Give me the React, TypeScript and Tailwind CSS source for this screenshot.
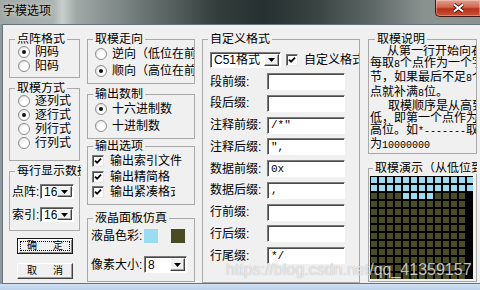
import React from "react";

type GroupProps = {
  title: string;
  className?: string;
  bodyClass?: string;
  legendClass?: string;
  children?: React.ReactNode;
};

function Group({ title, className = "", bodyClass = "", legendClass = "ml-[5px]", children }: GroupProps) {
  return (
    <fieldset className={"min-w-0 border border-[#a9a9a9] " + className}>
      <legend className={"px-[2px] h-[12px] leading-[12px] whitespace-nowrap overflow-hidden " + legendClass}>
        {title}
      </legend>
      <div className={bodyClass}>{children}</div>
    </fieldset>
  );
}

function Radio({ label, checked = false, className = "" }: { label: string; checked?: boolean; className?: string }) {
  return (
    <div className={"flex items-center h-[14px] whitespace-nowrap overflow-hidden " + className}>
      <span className="w-[12px] h-[12px] shrink-0 rounded-full border border-[#8d8d8d] bg-[radial-gradient(circle_at_65%_65%,#ffffff_35%,#d6d6d6_100%)] flex items-center justify-center">
        {checked && <span className="w-[4px] h-[4px] rounded-full bg-[#111111]" />}
      </span>
      <span className="ml-[5px]">{label}</span>
    </div>
  );
}

function Check({ label, className = "", labelClass = "" }: { label: string; className?: string; labelClass?: string }) {
  return (
    <div className={"flex items-center h-[14px] whitespace-nowrap overflow-hidden " + className}>
      <span className="w-[12px] h-[12px] shrink-0 bg-white border border-t-[#7a7a7a] border-l-[#7a7a7a] border-b-[#e6e6e6] border-r-[#e6e6e6] shadow-[inset_1px_1px_0_#4a4a4a] flex items-center justify-center">
        <svg width="8" height="8" viewBox="0 0 8 8">
          <path d="M1 3.6l2.1 2.2L7 1.6" stroke="#000" strokeWidth="1.8" fill="none" />
        </svg>
      </span>
      <span className={"ml-[6px] overflow-hidden " + labelClass}>{label}</span>
    </div>
  );
}

function Combo({ value, className = "" }: { value: string; className?: string }) {
  return (
    <div className={"flex shrink-0 bg-white border border-t-[#7a7a7a] border-l-[#7a7a7a] border-b-white border-r-white shadow-[inset_1px_1px_0_#4a4a4a] " + className}>
      <span className="flex-1 pl-[3px] flex items-center overflow-hidden whitespace-nowrap">{value}</span>
      <span className="w-[15px] my-[1px] mr-[1px] bg-[#f0f0f0] border border-t-white border-l-white border-b-[#404040] border-r-[#404040] shadow-[inset_-1px_-1px_0_#a0a0a0] flex items-center justify-center">
        <svg width="7" height="4" viewBox="0 0 7 4">
          <path d="M0 0h7L3.5 4z" fill="#000" />
        </svg>
      </span>
    </div>
  );
}

// half-width ascii like the old bitmap font
function A({ children }: { children: React.ReactNode }) {
  return <span className="font-['Liberation_Mono',monospace] text-[10px]">{children}</span>;
}

const fields: [string, string][] = [
  ["段前缀:", ""],
  ["段后缀:", ""],
  ["注释前缀:", '/*"'],
  ["注释后缀:", '",'],
  ["数据前缀:", "0x"],
  ["数据后缀:", ","],
  ["行前缀:", ""],
  ["行后缀:", ""],
  ["行尾缀:", "*/"],
];

export default function App() {
  return (
    <div className="relative w-[480px] h-[290px] overflow-hidden flex flex-col bg-[#c6daee] text-[12px] leading-[14px] text-black font-['Liberation_Sans','Noto_Sans_CJK_SC',sans-serif]">
      {/* title bar */}
      <div className="h-[24px] shrink-0 flex items-start justify-between bg-[linear-gradient(90deg,#9fa7a5_0%,#aab2af_11%,#c7cecb_13%,#a0a8a6_16%,#6b7674_30%,#343e3c_45%,#263030_55%,#3a4442_66%,#5f6967_78%,#8a9290_88%,#8c9492_100%)]">
        <span className="ml-[3px] mt-[5px] leading-[13px] [text-shadow:0_0_6px_rgba(255,255,255,0.8)]">字模选项</span>
        <div className="w-[45px] h-[17px] rounded-bl-[5px] border-l border-b border-[#3d1a14] bg-[linear-gradient(#e4a090_0%,#d2654f_45%,#b8301a_55%,#cc5238_100%)] shadow-[inset_0_0_0_1px_rgba(255,255,255,0.3)] flex items-center justify-center">
          <svg width="13" height="10" viewBox="0 0 13 10">
            <path d="M2 1.5l9 7M11 1.5l-9 7" stroke="#3a1008" strokeWidth="3.6" />
            <path d="M2 1.5l9 7M11 1.5l-9 7" stroke="#ffffff" strokeWidth="2.2" />
          </svg>
        </div>
      </div>

      <div className="flex-1 flex min-h-0">
        <div className="w-[2px] bg-[#8d999c]" />
        <div className="flex-1 min-w-0 bg-[#f0f0f0] border-t border-l border-b border-[#66737c] flex gap-[7px] pl-[6px] pt-[8px]">
          {/* column 1 */}
          <div className="w-[71px] shrink-0 flex flex-col">
            <Group title="点阵格式" className="h-[45px]" bodyClass="pl-[8px]">
              <Radio label="阴码" checked className="h-[13px]" />
              <Radio label="阳码" className="h-[13px]" />
            </Group>
            <Group title="取模方式" className="mt-[4px] h-[79px]" bodyClass="pl-[8px]">
              <Radio label="逐列式" />
              <Radio label="逐行式" checked />
              <Radio label="列行式" />
              <Radio label="行列式" />
            </Group>
            <Group title="每行显示数据" className="mt-[4px] h-[66px]" bodyClass="pl-[2px]" legendClass="ml-[5px] max-w-[66px]">
              <div className="flex items-center mt-[7px] h-[15px]">
                <span className="w-[28px]">点阵:</span>
                <Combo value="16" className="w-[34px] h-[15px]" />
              </div>
              <div className="flex items-center mt-[8px] h-[15px]">
                <span className="w-[28px]">索引:</span>
                <Combo value="16" className="w-[34px] h-[15px]" />
              </div>
            </Group>
            <button className="mt-[7px] ml-[8px] w-[56px] h-[16px] p-[2px] bg-[#f0f0f0] border border-[#1a1a1a] shadow-[inset_1px_1px_0_#ffffff,inset_-1px_-1px_0_#8a8a8a] text-[10px] leading-[10px]">
              <span className="w-full h-full border border-dotted border-black flex items-center justify-between px-[6px]">
                <span>确</span>
                <span>定</span>
              </span>
            </button>
            <button className="mt-[9px] ml-[8px] w-[56px] h-[16px] p-[2px] bg-[#f0f0f0] border border-t-white border-l-white border-b-[#404040] border-r-[#404040] shadow-[inset_-1px_-1px_0_#a0a0a0] text-[10px] leading-[10px]">
              <span className="w-full h-full flex items-center justify-between px-[7px]">
                <span>取</span>
                <span>消</span>
              </span>
            </button>
          </div>

          {/* column 2 */}
          <div className="w-[108px] shrink-0 flex flex-col">
            <Group title="取模走向" className="h-[51px]" bodyClass="pl-[7px]">
              <Radio label="逆向（低位在前）" className="mt-[2px]" />
              <Radio label="顺向（高位在前）" checked className="mt-[3px]" />
            </Group>
            <Group title="输出数制" className="mt-[4px] h-[51px]" bodyClass="pl-[7px]">
              <Radio label="十六进制数" checked className="mt-[2px]" />
              <Radio label="十进制数" className="mt-[3px]" />
            </Group>
            <Group title="输出选项" className="mt-[1px] h-[65px]" bodyClass="pl-[4px]">
              <Check label="输出索引文件" className="mt-[2px]" />
              <Check label="输出精简格" className="mt-[2px]" />
              <Check label="输出紧凑格式" className="mt-[1px]" labelClass="w-[65px]" />
            </Group>
            <Group title="液晶面板仿真" className="mt-[7px] h-[70px]" bodyClass="pl-[3px]">
              <div className="flex items-center mt-[5px] h-[14px]">
                <span className="w-[53px]">液晶色彩:</span>
                <span className="w-[14px] h-[14px] bg-[#9bdcf0]" />
                <span className="ml-[13px] w-[14px] h-[14px] bg-[#484b24]" />
              </div>
              <div className="flex items-center mt-[13px] h-[17px]">
                <span className="w-[53px]">像素大小:</span>
                <Combo value="8" className="w-[43px] h-[17px]" />
              </div>
            </Group>
          </div>

          {/* column 3 */}
          <div className="w-[158px] shrink-0 flex flex-col">
            <Group title="自定义格式" className="h-[250px]" bodyClass="pl-[7px]">
              <div className="flex items-center mt-[7px] h-[16px] overflow-hidden">
                <Combo value="C51格式" className="w-[71px] h-[16px]" />
                <Check label="自定义格式" className="ml-[5px]" />
              </div>
              <div className="mt-[5px] flex flex-col gap-[4.75px]">
                {fields.map(([label, value]) => (
                  <div key={label} className="flex items-center h-[17px]">
                    <span className="w-[57px] whitespace-nowrap">{label}</span>
                    <div className="w-[78px] h-full bg-white border border-t-[#7a7a7a] border-l-[#7a7a7a] border-b-white border-r-white shadow-[inset_1px_1px_0_#4a4a4a] pl-[3px] flex items-center font-['Liberation_Mono',monospace] text-[11px]">
                      {value}
                    </div>
                  </div>
                ))}
              </div>
            </Group>
          </div>

          {/* column 4 */}
          <div className="w-[109px] shrink-0 ml-[1px] flex flex-col">
            <Group title="取模说明" className="h-[121px]" bodyClass="pl-[1px] overflow-hidden whitespace-nowrap leading-[12.2px]" legendClass="ml-[6px]">
              <div className="pl-[17px]">从第一行开始向右</div>
              <div>每取<A>8</A>个点作为一个字</div>
              <div>节，如果最后不足<A>8</A>个</div>
              <div>点就补满<A>8</A>位。</div>
              <div className="pl-[18px]">取模顺序是从高到</div>
              <div>低，即第一个点作为最</div>
              <div>高位。如<A>*-------</A>取</div>
              <div>为<A>10000000</A></div>
            </Group>
            <Group title="取模演示（从低位到高位）" className="mt-[8px] h-[120px]" bodyClass="pl-[1px]" legendClass="ml-[4px] max-w-[104px]">
              <div className="mt-[2px] w-[103px] h-[103px] bg-black p-[1px] grid grid-cols-[repeat(13,6px)] auto-rows-[6px] gap-[2px]">
                {Array.from({ length: 169 }, (_, i) => {
                  const r = Math.floor(i / 13);
                  const c = i % 13;
                  const blue = r < 2 || (r === 2 && c >= 4 && c <= 7);
                  const empty = r >= 2 && c === 12;
                  return (
                    <span
                      key={i}
                      className={blue ? "bg-[#9bdcf0]" : empty ? "bg-black" : "bg-[#4a4c24]"}
                    />
                  );
                })}
              </div>
            </Group>
          </div>
        </div>
      </div>

      <div className="h-[6px] shrink-0 bg-[linear-gradient(#cfe1f2,#bcd2e9)]" />

      {/* watermark */}
      <div className="absolute left-[226px] top-[261px] pointer-events-none text-[16px] leading-[18px] font-['Liberation_Sans',sans-serif] text-[rgba(255,255,255,0.75)] [text-shadow:0_0_1px_rgba(0,0,0,0.35)]">
        https://blog.csdn.net/qq_41359157
      </div>
    </div>
  );
}
